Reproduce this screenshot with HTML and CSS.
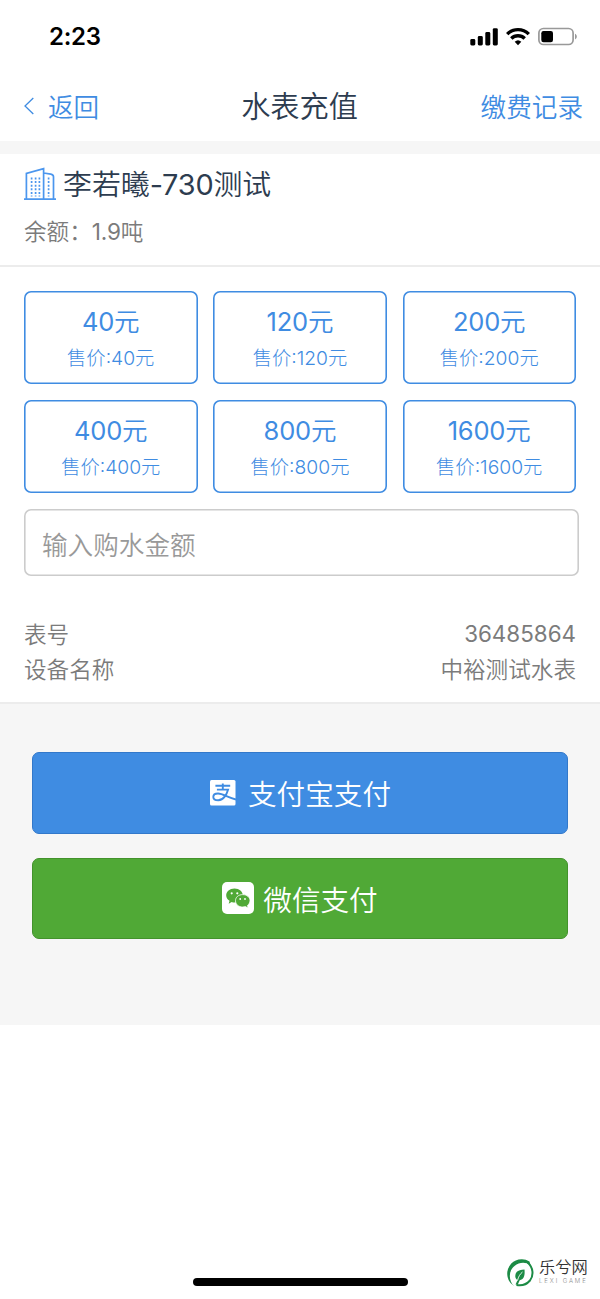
FILE: index.html
```html
<!DOCTYPE html>
<html lang="zh-CN">
<head>
<meta charset="utf-8">
<title>水表充值</title>
<link rel="stylesheet" href="styles.css">
</head>
<body>
<div class="screen">
  <header class="status">
    <span class="time">2:23</span>
    <svg class="status-icons" width="108" height="20" viewBox="0 0 108 20">
      <g fill="#000">
        <rect x="0.3" y="12" width="5" height="6.5" rx="1.4"/>
        <rect x="7.8" y="9" width="5" height="9.500" rx="1.4"/>
        <rect x="15.300" y="5" width="5" height="13.500" rx="1.4"/>
        <rect x="22.800" y="1.200" width="5" height="17.300" rx="1.4"/>
      </g>
      <g fill="none" stroke="#000" stroke-width="3.400">
        <path d="M37.200 7.100a15.300 15.300 0 0 1 21.600 0"/>
        <path d="M41.300 11.500a9.500 9.500 0 0 1 13.400 0"/>
      </g>
      <path d="M44.700 14.800a4.800 4.800 0 0 1 6.600 0L48 18.200z" fill="#000"/>
      <rect x="68.900" y="1.500" width="34.200" height="16" rx="4.500" fill="none" stroke="#999" stroke-width="1.700"/>
      <rect x="71.300" y="4" width="11.700" height="11.200" rx="2.200" fill="#000"/>
      <path d="M105 6.800c2.400 1 2.400 4.600 0 5.600z" fill="#999"/>
    </svg>
  </header>
  <nav class="nav">
    <a class="back">
      <svg width="12" height="18" viewBox="0 0 12 18"><path d="M10.300 1L2 9l8.300 8" fill="none" stroke="#3f8ce2" stroke-width="1.300"/></svg>
      <span>返回</span>
    </a>
    <h1 class="title">水表充值</h1>
    <a class="history">缴费记录</a>
  </nav>
  <section class="account">
    <div class="account-name">
      <svg width="32" height="34" viewBox="0 0 32 34" fill="none" stroke="#4b96ee" stroke-width="1.700">
        <path d="M0 32.200h32M2.400 32V6.500L19.600 1.600V32M19.600 6l7.200 1.200q2.700.5 2.700 2.600V32"/>
        <path d="M7.600 10.500v19M11.600 10.500v19M15.400 10.500v19M24.600 10.500v19" stroke-dasharray="2 1.600"/>
      </svg>
      <span>李若曦<i class="num">-730</i>测试</span>
    </div>
    <p class="balance">余额：<i class="num">1.9</i>吨</p>
  </section>
  <main class="purchase">
    <div class="amounts">
      <button class="amount"><b><i class="num">40</i>元</b><small>售价:40元</small></button>
      <button class="amount"><b><i class="num">120</i>元</b><small>售价:120元</small></button>
      <button class="amount"><b><i class="num">200</i>元</b><small>售价:200元</small></button>
      <button class="amount"><b><i class="num">400</i>元</b><small>售价:400元</small></button>
      <button class="amount"><b><i class="num">800</i>元</b><small>售价:800元</small></button>
      <button class="amount"><b><i class="num">1600</i>元</b><small>售价:1600元</small></button>
    </div>
    <div class="custom">输入购水金额</div>
    <dl class="details">
      <div><dt>表号</dt><dd class="digits">36485864</dd></div>
      <div><dt>设备名称</dt><dd>中裕测试水表</dd></div>
    </dl>
  </main>
  <section class="payments">
    <button class="pay alipay">
      <svg width="26" height="26" viewBox="0 0 26 26">
        <rect width="25.500" height="25.500" rx="1.500" fill="#fff"/>
        <g fill="none" stroke="#3f8ce2" stroke-width="1.900">
          <path d="M12.800 3.500v6M5.400 5.800h14.800M6.900 9.600h11.200c-1.200 4.500-4.500 10.600-9.800 10.600-3 0-5-1.300-5-3.300 0-2.100 2.100-3.400 4.700-3.400 4.800 0 9.500 3.700 18 6"/>
        </g>
      </svg>
      <span>支付宝支付</span>
    </button>
    <button class="pay wechat">
      <svg width="32" height="32" viewBox="0 0 32 32">
        <rect width="32" height="32" rx="5" fill="#fff"/>
        <path d="M12.500 6.500c4.800 0 8.300 3 8.300 7s-3.500 7-8.300 7q-1.500 0-2.800-.5l-3 1.800.8-3C5.400 17.500 4.200 15.600 4.200 13.500c0-4 3.500-7 8.300-7z" fill="#50a936"/>
        <path d="M20.700 12.600c4.300 0 7.300 2.700 7.300 6.100 0 1.900-1 3.500-2.500 4.700l.7 2.700-2.800-1.500q-1.300.4-2.700.4c-4.200 0-7.200-2.700-7.200-6.300s3-6.100 7.200-6.100z" fill="#50a936" stroke="#fff" stroke-width=".8"/>
        <g fill="#fff"><circle cx="9.700" cy="11.300" r="1.100"/><circle cx="15.300" cy="11.300" r="1.100"/><circle cx="18.200" cy="17" r=".9"/><circle cx="23" cy="17" r=".9"/></g>
      </svg>
      <span>微信支付</span>
    </button>
  </section>
  <footer class="bottom">
    <div class="home-bar"></div>
    <div class="brand">
      <svg width="30" height="30" viewBox="0 0 30 30">
        <path d="M25.500 4.500A14.400 14.400 0 1 0 10 29C4.500 23.500 4.200 14 10.500 9 15.500 5 21.500 5 26.500 8z" fill="#1c8b45"/>
        <path d="M23.500 5.500C29.500 10.500 29.800 18.500 26 23.500 22.500 27.500 17.500 29 12.500 28" fill="none" stroke="#1c8b45" stroke-width="2"/>
        <path d="M20.500 12.500c-6 .2-9.500 2.300-9.200 7 .1 2.100 1.200 3 2.200 3.700l-2 4.200 2.200.4 2-4.500c4.700-1 5.300-5.500 4.800-10.800z" fill="#1c8b45"/>
        <path d="M18.500 15c-2.500 2-4 4.500-5 8.500" fill="none" stroke="#fff" stroke-width=".9"/>
      </svg>
      <div class="brand-text"><strong>乐兮网</strong><em>LEXI GAME</em></div>
    </div>
  </footer>
</div>
</body>
</html>
```
FILE: styles.css
```css
* { box-sizing: border-box; }
body, h1, p, dl, dd { margin: 0; }
body {
  background: #fff;
  font-family: Inter, "Noto Sans CJK SC", sans-serif;
  font-weight: 350;
}
button { font: inherit; padding: 0; }
svg { display: block; flex: none; }
.num { font-style: normal; font-weight: 400; letter-spacing: -.2px; }
.screen { width: 600px; height: 1299px; display: flex; flex-direction: column; overflow: hidden; }

.status { height: 74px; padding: 0 22px 0 49px; display: flex; align-items: center; justify-content: space-between; }
.time { font-size: 24px; font-weight: 600; line-height: 30px; letter-spacing: -.3px; }

.nav {
  height: 80px;
  padding: 0 17px 3px 23px;
  border-bottom: 13px solid #f6f6f6;
  display: grid;
  grid-template-columns: 1fr auto 1fr;
  align-items: center;
  color: #3f8ce2;
  font-size: 25.600px;
}
.back { display: flex; align-items: center; gap: 13px; }
.back span, .history { padding-bottom: 2px; }
.title { color: #2d3c4f; font-size: 29.200px; font-weight: 350; margin-left: -7px; padding-bottom: 4px; }
.history { text-align: right; }

.account { height: 113px; padding: 12px 24px 0; border-bottom: 2px solid #ececec; }
.account-name { height: 36px; display: flex; align-items: center; gap: 7px; color: #2d3c4f; font-size: 28.900px; }
.account-name span { padding-bottom: 4px; }
.balance { margin-top: 13px; line-height: 34px; font-size: 22.600px; color: #7b7b7b; }

.purchase { height: 437px; padding: 24px 24px 0; border-bottom: 2px solid #ececec; }
.amounts { display: grid; grid-template-columns: repeat(3, 173.500px); column-gap: 15.750px; row-gap: 16px; }
.amount {
  height: 93px;
  border: 0;
  box-shadow: inset 0 0 0 1.600px #3f8ce2;
  border-radius: 7px;
  background: #fff;
  color: #3f8ce2;
  display: flex;
  flex-direction: column;
  align-items: center;
  padding-top: 12px;
}
.amount b { font-size: 25.500px; line-height: 37px; font-weight: 350; }
.amount small { font-size: 19.300px; line-height: 37px; font-weight: 300; }
.custom {
  width: 555px;
  height: 67px;
  margin-top: 16px;
  padding: 6px 0 0 18px;
  box-shadow: inset 0 0 0 1.600px #ccc;
  border-radius: 7px;
  color: #999;
  font-size: 25.600px;
  line-height: 62px;
}
.details { margin-top: 40px; padding-top: 1px; color: #7b7b7b; font-size: 22.600px; }
.details div { display: flex; justify-content: space-between; height: 35px; line-height: 35px; }
.digits { font-weight: 400; font-size: 22.400px; line-height: 33px; }

.payments { height: 321px; padding: 48px 32px 0; background: #f6f6f6; display: flex; flex-direction: column; gap: 24px; }
.pay {
  height: 81.500px;
  border-radius: 7px;
  display: flex;
  align-items: center;
  justify-content: center;
  color: #fff;
  font-size: 28.600px;
}
.pay span { line-height: 40px; padding-top: 5px; }
.alipay { background: #3f8ce2; border: 1px solid #3278ca; gap: 12px; padding-left: 1px; }
.wechat { background: #50a936; border: 1px solid #43932c; gap: 9px; }

.bottom { flex: 1; display: grid; grid-template-columns: 193px 215px 1fr; align-items: end; }
.home-bar { grid-column: 2; height: 8px; margin-bottom: 13px; border-radius: 4px; background: #000; }
.brand { display: flex; justify-content: flex-end; gap: 5px; padding: 0 12px 12px 0; }
.brand-text { width: 49px; white-space: nowrap; color: #333; }
.brand-text strong { display: block; font-size: 16.300px; line-height: 20px; font-weight: 350; }
.brand-text em { display: block; font-style: normal; font-size: 6px; line-height: 8px; letter-spacing: 1.900px; color: #888; }
```
